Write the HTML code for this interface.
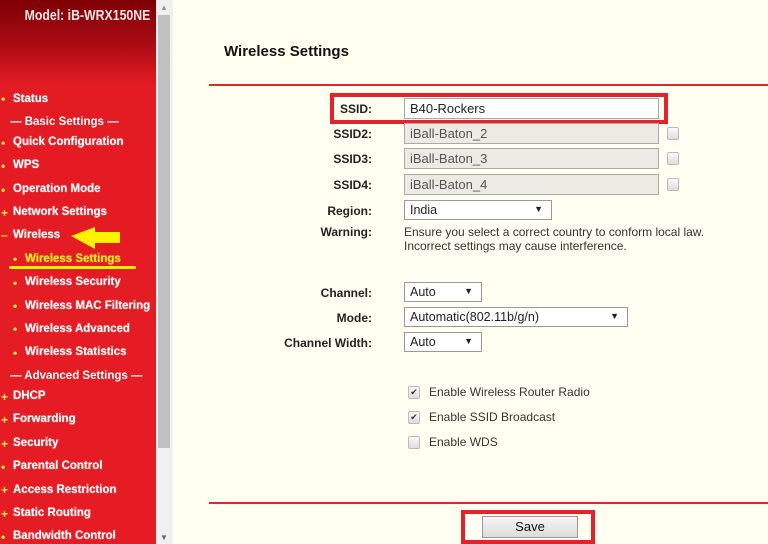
<!DOCTYPE html>
<html><head><meta charset="utf-8"><style>
*{margin:0;padding:0;box-sizing:border-box}
body{width:768px;height:544px;overflow:hidden;background:#fffff2;font-family:"Liberation Sans",Arial,sans-serif;position:relative}
#side{position:absolute;left:0;top:0;width:156px;height:544px;background:linear-gradient(#7e0005 0px,#a50a12 40px,#e31b23 85px,#e61c24 100%)}
#model{position:absolute;right:6px;top:7px;color:#f2e6e6;font-weight:bold;font-size:15px;transform:scaleX(.82);transform-origin:right;white-space:nowrap}
.m{position:absolute;color:#fff;font-weight:bold;font-size:11.5px;text-shadow:0 0 1px #ffb0b0;white-space:nowrap}
.b{position:absolute;color:#ffe14a;font-weight:bold;font-size:12px}
.hd{position:absolute;left:10px;color:#fff;font-weight:bold;font-size:11.5px;white-space:nowrap}
#sb{position:absolute;left:156px;top:0;width:17px;height:544px;background:#f0f0f0}
#th{position:absolute;left:158px;top:15px;width:12px;height:433px;background:#c1c1c1}
.t{position:absolute;font-size:12px;color:#333;white-space:nowrap}
.l{position:absolute;font-size:12px;font-weight:bold;color:#222;text-align:right;width:160px;left:212px}
.in{position:absolute;left:404px;width:255px;height:21px;border:1px solid #aaa;background:#ebebe4;font-size:13px;color:#555;padding:2px 5px}
.sel{position:absolute;left:404px;height:20px;border:1px solid #999;background:#fff;font-size:12.5px;color:#222;padding:2px 5px}
.sel i{position:absolute;right:8px;top:3px;font-style:normal;font-size:9px}
.cb{position:absolute;width:12px;height:13px;border:1px solid #bbb;border-radius:2px;background:linear-gradient(#fafafa,#ddd);font-size:9px;line-height:11px;text-align:center;color:#333}
.red{position:absolute;left:209px;width:559px;height:2px;background:#e8232b}
</style></head><body>
<div id="side">
<div id="model">Model: iB-WRX150NE</div>
</div>
<div class="b" style="left:1px;top:92px">•</div><div class="m" style="left:13px;top:93px">Status</div>
<div class="hd" style="top:116px">— Basic Settings —</div>
<div class="b" style="left:1px;top:136px">•</div><div class="m" style="left:13px;top:136px">Quick Configuration</div>
<div class="b" style="left:1px;top:159px">•</div><div class="m" style="left:13px;top:159px">WPS</div>
<div class="b" style="left:1px;top:183px">•</div><div class="m" style="left:13px;top:183px">Operation Mode</div>
<div class="b" style="left:1px;top:206px">+</div><div class="m" style="left:13px;top:206px">Network Settings</div>
<div class="b" style="left:1px;top:228px">–</div><div class="m" style="left:13px;top:229px">Wireless</div>
<svg style="position:absolute;left:70px;top:226px" width="52" height="24"><path d="M1 10 L25 1 L25 6 L50 6 L50 17 L25 17 L25 23 Z" fill="#fff200"/></svg>
<div class="b" style="left:13px;top:252px">•</div><div class="m" style="left:25px;top:253px;color:#fff200">Wireless Settings</div>
<div style="position:absolute;left:9px;top:266px;width:127px;height:3px;background:#fff200;border-radius:2px"></div>
<div class="b" style="left:13px;top:276px">•</div><div class="m" style="left:25px;top:276px">Wireless Security</div>
<div class="b" style="left:13px;top:299px">•</div><div class="m" style="left:25px;top:300px">Wireless MAC Filtering</div>
<div class="b" style="left:13px;top:322px">•</div><div class="m" style="left:25px;top:323px">Wireless Advanced</div>
<div class="b" style="left:13px;top:346px">•</div><div class="m" style="left:25px;top:346px">Wireless Statistics</div>
<div class="hd" style="top:370px">— Advanced Settings —</div>
<div class="b" style="left:1px;top:390px">+</div><div class="m" style="left:13px;top:390px">DHCP</div>
<div class="b" style="left:1px;top:413px">+</div><div class="m" style="left:13px;top:413px">Forwarding</div>
<div class="b" style="left:1px;top:437px">+</div><div class="m" style="left:13px;top:437px">Security</div>
<div class="b" style="left:1px;top:460px">•</div><div class="m" style="left:13px;top:460px">Parental Control</div>
<div class="b" style="left:1px;top:483px">+</div><div class="m" style="left:13px;top:484px">Access Restriction</div>
<div class="b" style="left:1px;top:507px">+</div><div class="m" style="left:13px;top:507px">Static Routing</div>
<div class="b" style="left:1px;top:530px">•</div><div class="m" style="left:13px;top:530px">Bandwidth Control</div>
<div id="sb"></div><div id="th"></div>
<div style="position:absolute;left:160px;top:3px;font-size:8px;color:#999">▲</div>
<div style="position:absolute;left:160px;top:533px;font-size:8px;color:#666">▼</div>

<div style="position:absolute;left:224px;top:43px;font-size:15px;font-weight:bold;color:#111">Wireless Settings</div>
<div class="red" style="top:84px"></div>
<div style="position:absolute;left:330px;top:93px;width:338px;height:31px;border:4px solid #e8202a"></div>
<div class="l" style="top:102px">SSID:</div>
<div class="in" style="top:98px;background:#fff;color:#222">B40-Rockers</div>
<div class="l" style="top:127px">SSID2:</div><div class="in" style="top:123px">iBall-Baton_2</div><div class="cb" style="left:667px;top:127px"></div>
<div class="l" style="top:152px">SSID3:</div><div class="in" style="top:148px">iBall-Baton_3</div><div class="cb" style="left:667px;top:152px"></div>
<div class="l" style="top:178px">SSID4:</div><div class="in" style="top:174px">iBall-Baton_4</div><div class="cb" style="left:667px;top:178px"></div>
<div class="l" style="top:204px">Region:</div><div class="sel" style="top:200px;width:148px">India<i>▼</i></div>
<div class="l" style="top:225px">Warning:</div>
<div class="t" style="left:404px;top:225px;line-height:14px">Ensure you select a correct country to conform local law.<br>Incorrect settings may cause interference.</div>
<div class="l" style="top:286px">Channel:</div><div class="sel" style="top:282px;width:78px">Auto<i>▼</i></div>
<div class="l" style="top:311px">Mode:</div><div class="sel" style="top:307px;width:224px">Automatic(802.11b/g/n)<i>▼</i></div>
<div class="l" style="top:336px">Channel Width:</div><div class="sel" style="top:332px;width:78px">Auto<i>▼</i></div>
<div class="cb" style="left:408px;top:386px">✔</div><div class="t" style="left:429px;top:385px">Enable Wireless Router Radio</div>
<div class="cb" style="left:408px;top:411px">✔</div><div class="t" style="left:429px;top:410px">Enable SSID Broadcast</div>
<div class="cb" style="left:408px;top:436px"></div><div class="t" style="left:429px;top:435px">Enable WDS</div>
<div class="red" style="top:502px"></div>
<div style="position:absolute;left:461px;top:510px;width:134px;height:34px;border:4px solid #e8202a"></div>
<div style="position:absolute;left:482px;top:516px;width:96px;height:22px;border:1px solid #999;background:linear-gradient(#f6f6f6,#dcdcdc);text-align:center;font-size:13px;line-height:20px;color:#111">Save</div>
</body></html>
